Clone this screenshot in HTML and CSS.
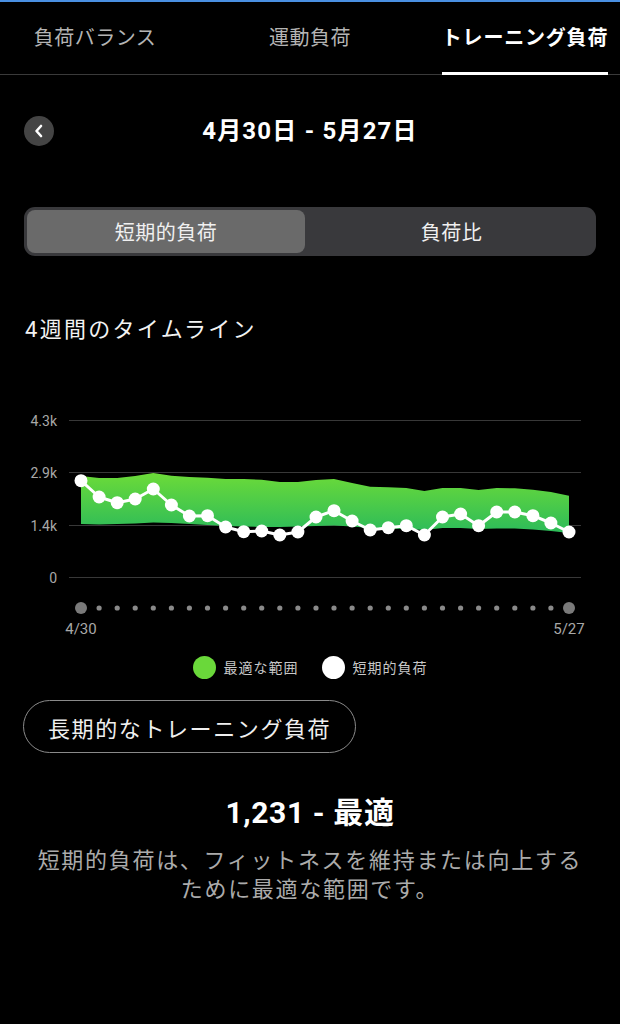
FILE: index.html
```html
<!DOCTYPE html>
<html lang="ja">
<head>
    <meta charset="UTF-8">
    <meta name="viewport" content="width=device-width, initial-scale=1.0">
    <title>トレーニング負荷</title>
    <link rel="stylesheet" href="styles.css">
</head>
<body>
    <div class="top-edge"></div>

    <nav class="tabs">
        <div class="tab"><span>負荷バランス</span></div>
        <div class="tab"><span>運動負荷</span></div>
        <div class="tab active"><span>トレーニング負荷</span></div>
    </nav>

    <header class="period">
        <button class="back" aria-label="前へ">
            <svg width="10" height="14" viewBox="0 0 10 14">
                <path d="M7 2 L2.5 7 L7 12" fill="none" stroke="#fff" stroke-width="2.6" stroke-linecap="round" stroke-linejoin="round"/>
            </svg>
        </button>
        <h1>4月30日 - 5月27日</h1>
        <span></span>
    </header>

    <div class="segment">
        <div class="seg selected">短期的負荷</div>
        <div class="seg">負荷比</div>
    </div>

    <h2 class="section-title">4週間のタイムライン</h2>

    <svg class="chart" width="620" height="245" viewBox="0 0 620 245">
        <defs>
            <linearGradient id="band" x1="0" y1="0" x2="0" y2="1">
                <stop offset="0" stop-color="#6cdb38"/>
                <stop offset="1" stop-color="#2cbb5a"/>
            </linearGradient>
        </defs>

        <!-- grid -->
        <g stroke="#383838" stroke-width="1">
            <line x1="69" y1="21.5" x2="581" y2="21.5"/>
            <line x1="69" y1="73.5" x2="581" y2="73.5"/>
            <line x1="69" y1="126.5" x2="581" y2="126.5"/>
            <line x1="69" y1="178.5" x2="581" y2="178.5"/>
        </g>
        <g class="axis-label" text-anchor="end">
            <text x="57" y="22" dominant-baseline="central">4.3k</text>
            <text x="57" y="74" dominant-baseline="central">2.9k</text>
            <text x="57" y="127" dominant-baseline="central">1.4k</text>
            <text x="57" y="179" dominant-baseline="central">0</text>
        </g>

        <!-- optimal range -->
        <polygon fill="url(#band)" points="
            81,77 99.1,79 117.2,79 135.2,77 153.3,74 171.4,76.7 189.4,78 207.5,78.7 225.6,80 243.7,80
            261.7,80.7 279.8,83 297.9,83 316,81 334,80 352.1,84 370.2,87.7 388.3,88.3 406.3,89 424.4,92
            442.5,89 460.6,89 478.6,91 496.7,89 514.8,89.3 532.9,90.7 550.9,93 569,96.7
            569,134 550.9,132 532.9,130.5 514.8,129.5 496.7,129.5 478.6,130 460.6,129 442.5,129 424.4,131
            406.3,130 388.3,129.5 370.2,129 352.1,127.5 334,126.5 316,127 297.9,127.5 279.8,128 261.7,128
            243.7,127.5 225.6,127 207.5,126 189.4,125 171.4,124 153.3,123.5 135.2,124.5 117.2,125 99.1,125.5 81,125"/>

        <!-- short-term load -->
        <polyline fill="none" stroke="#fff" stroke-width="3" stroke-linejoin="round" points="
            81,81.7 99.1,98 117.2,103.7 135.2,100 153.3,90 171.4,106 189.4,117 207.5,116.7 225.6,128 243.7,132.7
            261.7,132 279.8,136 297.9,133 316,118 334,111.7 352.1,122 370.2,131 388.3,128.7 406.3,126.7 424.4,136
            442.5,118 460.6,115 478.6,126.7 496.7,113 514.8,113 532.9,116.7 550.9,124 569,133"/>
        <g fill="#fff">
            <circle cx="81" cy="81.7" r="6.5"/>
            <circle cx="99.1" cy="98" r="6.5"/>
            <circle cx="117.2" cy="103.7" r="6.5"/>
            <circle cx="135.2" cy="100" r="6.5"/>
            <circle cx="153.3" cy="90" r="6.5"/>
            <circle cx="171.4" cy="106" r="6.5"/>
            <circle cx="189.4" cy="117" r="6.5"/>
            <circle cx="207.5" cy="116.7" r="6.5"/>
            <circle cx="225.6" cy="128" r="6.5"/>
            <circle cx="243.7" cy="132.7" r="6.5"/>
            <circle cx="261.7" cy="132" r="6.5"/>
            <circle cx="279.8" cy="136" r="6.5"/>
            <circle cx="297.9" cy="133" r="6.5"/>
            <circle cx="316" cy="118" r="6.5"/>
            <circle cx="334" cy="111.7" r="6.5"/>
            <circle cx="352.1" cy="122" r="6.5"/>
            <circle cx="370.2" cy="131" r="6.5"/>
            <circle cx="388.3" cy="128.7" r="6.5"/>
            <circle cx="406.3" cy="126.7" r="6.5"/>
            <circle cx="424.4" cy="136" r="6.5"/>
            <circle cx="442.5" cy="118" r="6.5"/>
            <circle cx="460.6" cy="115" r="6.5"/>
            <circle cx="478.6" cy="126.7" r="6.5"/>
            <circle cx="496.7" cy="113" r="6.5"/>
            <circle cx="514.8" cy="113" r="6.5"/>
            <circle cx="532.9" cy="116.7" r="6.5"/>
            <circle cx="550.9" cy="124" r="6.5"/>
            <circle cx="569" cy="133" r="6.5"/>
        </g>

        <!-- day markers -->
        <g fill="#8a8a8a">
            <circle cx="81" cy="209" r="6" fill="#7a7a7a"/>
            <circle cx="99.1" cy="209" r="2.6"/>
            <circle cx="117.2" cy="209" r="2.6"/>
            <circle cx="135.2" cy="209" r="2.6"/>
            <circle cx="153.3" cy="209" r="2.6"/>
            <circle cx="171.4" cy="209" r="2.6"/>
            <circle cx="189.4" cy="209" r="2.6"/>
            <circle cx="207.5" cy="209" r="2.6"/>
            <circle cx="225.6" cy="209" r="2.6"/>
            <circle cx="243.7" cy="209" r="2.6"/>
            <circle cx="261.7" cy="209" r="2.6"/>
            <circle cx="279.8" cy="209" r="2.6"/>
            <circle cx="297.9" cy="209" r="2.6"/>
            <circle cx="316" cy="209" r="2.6"/>
            <circle cx="334" cy="209" r="2.6"/>
            <circle cx="352.1" cy="209" r="2.6"/>
            <circle cx="370.2" cy="209" r="2.6"/>
            <circle cx="388.3" cy="209" r="2.6"/>
            <circle cx="406.3" cy="209" r="2.6"/>
            <circle cx="424.4" cy="209" r="2.6"/>
            <circle cx="442.5" cy="209" r="2.6"/>
            <circle cx="460.6" cy="209" r="2.6"/>
            <circle cx="478.6" cy="209" r="2.6"/>
            <circle cx="496.7" cy="209" r="2.6"/>
            <circle cx="514.8" cy="209" r="2.6"/>
            <circle cx="532.9" cy="209" r="2.6"/>
            <circle cx="550.9" cy="209" r="2.6"/>
            <circle cx="569" cy="209" r="6" fill="#7a7a7a"/>
        </g>
        <g class="date-label" text-anchor="middle">
            <text x="81" y="230" dominant-baseline="central">4/30</text>
            <text x="569" y="230" dominant-baseline="central">5/27</text>
        </g>
    </svg>

    <div class="legend">
        <span class="dot green"></span><span>最適な範囲</span>
        <span class="dot white"></span><span>短期的負荷</span>
    </div>

    <button class="pill">長期的なトレーニング負荷</button>

    <div class="summary">
        <p class="value">1,231 - 最適</p>
        <p class="desc">短期的負荷は、フィットネスを維持または向上する<br>ために最適な範囲です。</p>
    </div>
</body>
</html>
```

FILE: styles.css
```css
body {
    margin: 0;
    background-color: #000;
    color: #fff;
    font-family: Roboto, "Noto Sans CJK JP", sans-serif;
    width: 620px;
}

.top-edge {
    height: 2px;
    background-color: #4a90e2;
}

/* tabs */
.tabs {
    display: grid;
    grid-template-columns: 190px 240px 1fr;
    height: 73px;
    box-shadow: inset 0 -1px 0 #3a3a3a;
}

.tab {
    display: flex;
    justify-content: center;
    align-items: flex-end;
}

.tab span {
    font-size: 20px;
    letter-spacing: 0.5px;
    line-height: 28px;
    padding-bottom: 20px;
    border-bottom: 3px solid transparent;
    color: #b4b4b4;
}

.tab.active span {
    color: #fff;
    font-weight: bold;
    border-bottom-color: #fff;
    letter-spacing: 0.8px;
}

/* period header */
.period {
    display: grid;
    grid-template-columns: 1fr auto 1fr;
    align-items: center;
    padding: 0 24px;
    margin-top: 40px;
    height: 32px;
}

.back {
    width: 30px;
    height: 30px;
    border-radius: 50%;
    border: none;
    padding: 0;
    background-color: #444;
    display: flex;
    align-items: center;
    justify-content: center;
}

.period h1 {
    margin: 0;
    font-size: 24px;
    font-weight: bold;
    letter-spacing: 1.2px;
    line-height: 32px;
}

/* segmented control */
.segment {
    display: grid;
    grid-template-columns: 1fr 1fr;
    margin: 60px 24px 0;
    padding: 3px;
    height: 43px;
    background-color: #39393c;
    border-radius: 11px;
}

.seg {
    display: flex;
    align-items: center;
    justify-content: center;
    font-size: 20px;
    letter-spacing: 0.5px;
    color: #f0f0f0;
    border-radius: 8px;
}

.seg.selected {
    background-color: #6a6a6a;
    margin-right: 5px;
}

/* timeline */
.section-title {
    margin: 59px 0 0 25px;
    font-size: 22px;
    font-weight: normal;
    letter-spacing: 2.3px;
    line-height: 30px;
    color: #f2f2f2;
}

.chart {
    display: block;
    margin-top: 54px;
}

.axis-label text {
    font-size: 14px;
    fill: #a8a8a8;
}

.date-label text {
    font-size: 15px;
    fill: #a8a8a8;
}

.legend {
    display: flex;
    justify-content: center;
    align-items: center;
    margin-top: 11px;
    height: 24px;
    font-size: 14px;
    letter-spacing: 1px;
    color: #c8c8c8;
}

.dot {
    width: 23px;
    height: 23px;
    border-radius: 50%;
    margin-right: 8px;
}

.dot.green {
    background-color: #6ad83a;
}

.dot.white {
    background-color: #fff;
    margin-left: 23px;
}

/* long term button */
.pill {
    display: block;
    margin: 21px 0 0 23px;
    height: 53px;
    padding: 0 24px;
    border: 1.5px solid #8a8a8a;
    border-radius: 27px;
    background: transparent;
    color: #efefef;
    font-family: inherit;
    font-size: 22px;
    letter-spacing: 1.6px;
}

/* summary */
.summary {
    text-align: center;
    margin-top: 42px;
}

.value {
    margin: 0;
    font-size: 30px;
    font-weight: bold;
    letter-spacing: 0.6px;
    line-height: 36px;
}

.desc {
    margin: 15px 0 0;
    font-size: 22px;
    letter-spacing: 1.7px;
    line-height: 29px;
    color: #ababab;
}
```
